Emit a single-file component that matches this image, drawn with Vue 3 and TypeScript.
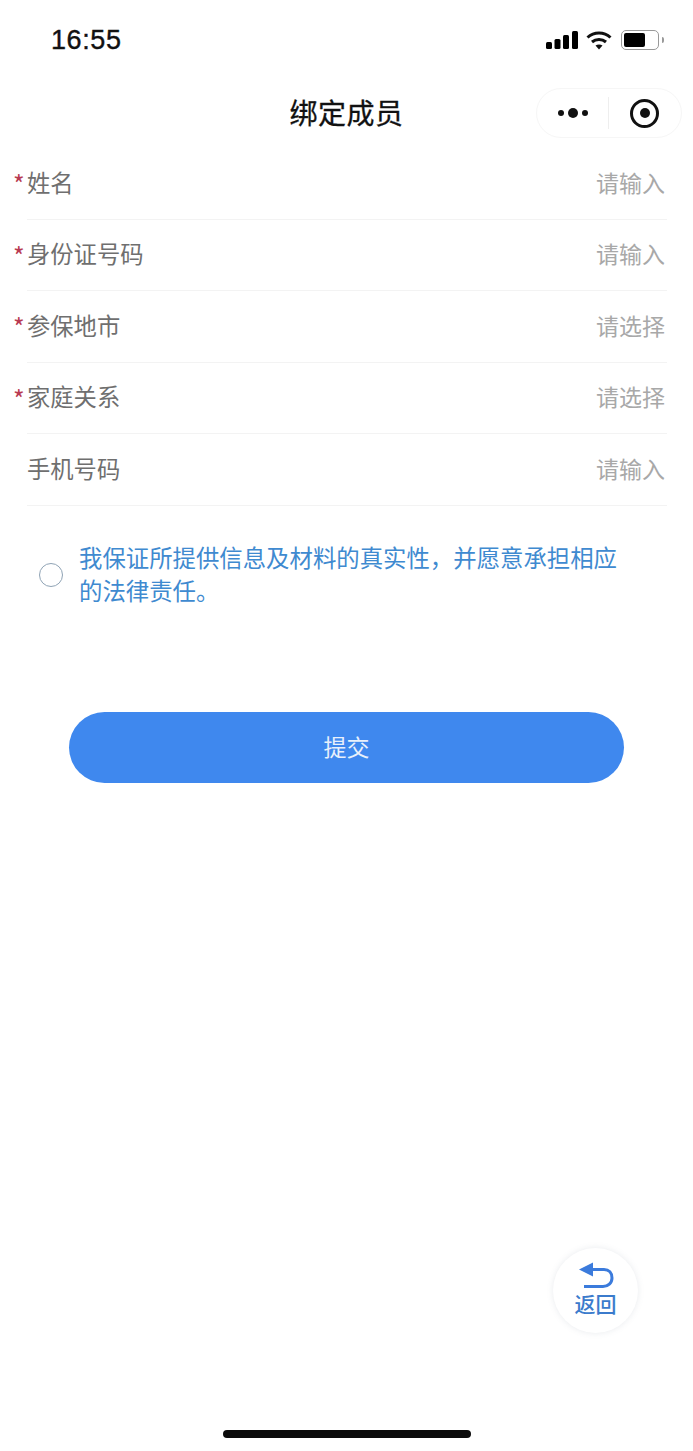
<script setup lang="ts">
type Field = { label: string; hint: string; required: boolean }

const fields: Field[] = [
  { label: '姓名', hint: '请输入', required: true },
  { label: '身份证号码', hint: '请输入', required: true },
  { label: '参保地市', hint: '请选择', required: true },
  { label: '家庭关系', hint: '请选择', required: true },
  { label: '手机号码', hint: '请输入', required: false },
]
</script>

<template>
  <div class="page">
    <header class="status">
      <span class="time">16:55</span>
      <div class="status-icons">
        <svg class="signal" width="32" height="20" viewBox="0 0 32 20">
          <rect x="0" y="12" width="6" height="7" rx="1.500" />
          <rect x="8.500" y="9" width="6" height="10" rx="1.500" />
          <rect x="17" y="5" width="6" height="14" rx="1.500" />
          <rect x="26" y="1" width="6" height="18" rx="1.500" />
        </svg>
        <svg class="wifi" width="26" height="20" viewBox="0 0 26 20" fill="none" stroke="#111" stroke-width="3">
          <path d="M1.500 7.500C8 1.500 18 1.500 24.500 7.500" />
          <path d="M6 12C10 8.500 16 8.500 20 12" />
          <path d="M13 19.500L9.500 15.500C11.500 14 14.500 14 16.500 15.500Z" fill="#111" stroke="none" />
        </svg>
        <div class="battery"><div class="battery-fill"></div></div>
        <div class="battery-tip"></div>
      </div>
    </header>

    <nav class="navbar">
      <h1 class="title">绑定成员</h1>
      <div class="capsule">
        <div class="dots"><i></i><i class="big"></i><i></i></div>
        <div class="sep"></div>
        <div class="target"><i></i></div>
      </div>
    </nav>

    <section class="form">
      <div v-for="f in fields" :key="f.label" class="row">
        <span v-if="f.required" class="star">*</span>
        <span class="label">{{ f.label }}</span>
        <span class="hint">{{ f.hint }}</span>
      </div>
    </section>

    <div class="agree">
      <span class="radio"></span>
      <p class="agree-text">我保证所提供信息及材料的真实性，并愿意承担相应的法律责任。</p>
    </div>

    <div class="submit-wrap">
      <button class="submit">提交</button>
    </div>

    <button class="back">
      <svg width="38" height="30" viewBox="0 0 38 30" fill="none">
        <path d="M14 7.500H27C32 7.500 35 11 35 16C35 21 31 24.500 26 24.500H7" stroke="#3b7bdc" stroke-width="3" />
        <path d="M2 7.500L16 0.500V14.500Z" fill="#3b7bdc" />
      </svg>
      <span>返回</span>
    </button>

    <div class="home-bar"></div>
  </div>
</template>

<style>
html, body { margin: 0; background: #fff; }
</style>

<style scoped>
.page {
  position: relative;
  width: 693px;
  height: 1451px;
  overflow: hidden;
  background: #fff;
  font-family: "Noto Sans CJK SC", "Liberation Sans", sans-serif;
}
.status {
  height: 80px;
  padding: 0 29px 0 51px;
  display: flex;
  align-items: center;
  justify-content: space-between;
  box-sizing: border-box;
}
.time {
  font-family: "Liberation Sans", sans-serif;
  font-size: 27px;
  font-weight: 500;
  color: #111;
  letter-spacing: 0.6px;
  -webkit-text-stroke: 0.4px #111;
}
.status-icons { display: flex; align-items: center; }
.signal { margin-right: 8px; }
.wifi { margin-right: 9px; }
.battery {
  width: 38px;
  height: 20px;
  border: 1.5px solid #999;
  border-radius: 5px;
  padding: 2px;
  box-sizing: border-box;
  display: flex;
}
.battery-fill { width: 21px; background: #000; border-radius: 2px; }
.battery-tip { width: 2px; height: 6px; margin-left: 3px; background: #999; border-radius: 0 2px 2px 0; }
.navbar {
  position: relative;
  height: 66px;
  display: flex;
  align-items: center;
  justify-content: center;
}
.title {
  margin: 0 0 2px;
  font-size: 28px;
  font-weight: 400;
  color: #111;
  letter-spacing: 0.5px;
  -webkit-text-stroke: 0.3px #111;
}
.capsule {
  position: absolute;
  left: 536px;
  top: 8px;
  width: 146px;
  height: 50px;
  box-sizing: border-box;
  border: 1px solid #f6f6f6;
  border-radius: 25px;
  display: flex;
  align-items: center;
}
.dots { width: 71px; display: flex; align-items: center; justify-content: center; gap: 4px; }
.dots i { width: 6px; height: 6px; border-radius: 50%; background: #111; }
.dots i.big { width: 10px; height: 10px; }
.sep { width: 1px; height: 32px; background: #eee; }
.target {
  width: 29px;
  height: 29px;
  margin-left: 21px;
  border: 3.500px solid #111;
  border-radius: 50%;
  box-sizing: border-box;
  display: flex;
  align-items: center;
  justify-content: center;
}
.target i { width: 10px; height: 10px; border-radius: 50%; background: #111; }
.form { margin-top: 2px; }
.row {
  position: relative;
  height: 71.500px;
  margin: 0 26px 0 27px;
  padding-bottom: 3px;
  border-bottom: 1px solid #f3f3f3;
  box-sizing: border-box;
  display: flex;
  align-items: center;
  justify-content: space-between;
}
.star {
  position: absolute;
  left: -14px;
  top: 23px;
  font-size: 25px;
  line-height: 24px;
  color: #b83a52;
}
.label { font-size: 23.300px; color: #6f6f6f; }
.hint { font-size: 23px; color: #a8a8a8; margin-right: 2px; }
.agree {
  display: flex;
  align-items: center;
  margin-top: 35px;
  padding: 0 70px 0 39px;
}
.radio {
  flex: none;
  width: 24px;
  height: 24px;
  margin: 2px 16px 0 0;
  border: 1.500px solid #8fa3b5;
  border-radius: 50%;
  box-sizing: border-box;
}
.agree-text {
  margin: 0;
  font-size: 23.400px;
  line-height: 33px;
  color: #3f8ad0;
}
.submit-wrap {
  margin-top: 105px;
  display: flex;
  justify-content: center;
}
.submit {
  width: 555px;
  height: 71px;
  padding: 0 0 3px;
  border: 0;
  border-radius: 36px;
  background: #3f88ee;
  color: #e8f0fb;
  font-family: inherit;
  font-size: 23px;
}
.back {
  position: absolute;
  left: 553px;
  top: 1248px;
  width: 85px;
  height: 85px;
  padding: 0 0 6px;
  border: 0;
  border-radius: 50%;
  background: #fff;
  box-shadow: 0 0 6px rgba(120, 130, 150, 0.16);
  color: #3b7bcc;
  font-family: inherit;
  font-size: 21px;
  font-weight: 500;
  line-height: 22px;
  display: flex;
  flex-direction: column;
  align-items: center;
  justify-content: center;
}
.home-bar {
  position: absolute;
  left: 223px;
  top: 1430px;
  width: 248px;
  height: 8px;
  border-radius: 4px;
  background: #0b0b0b;
}
</style>
